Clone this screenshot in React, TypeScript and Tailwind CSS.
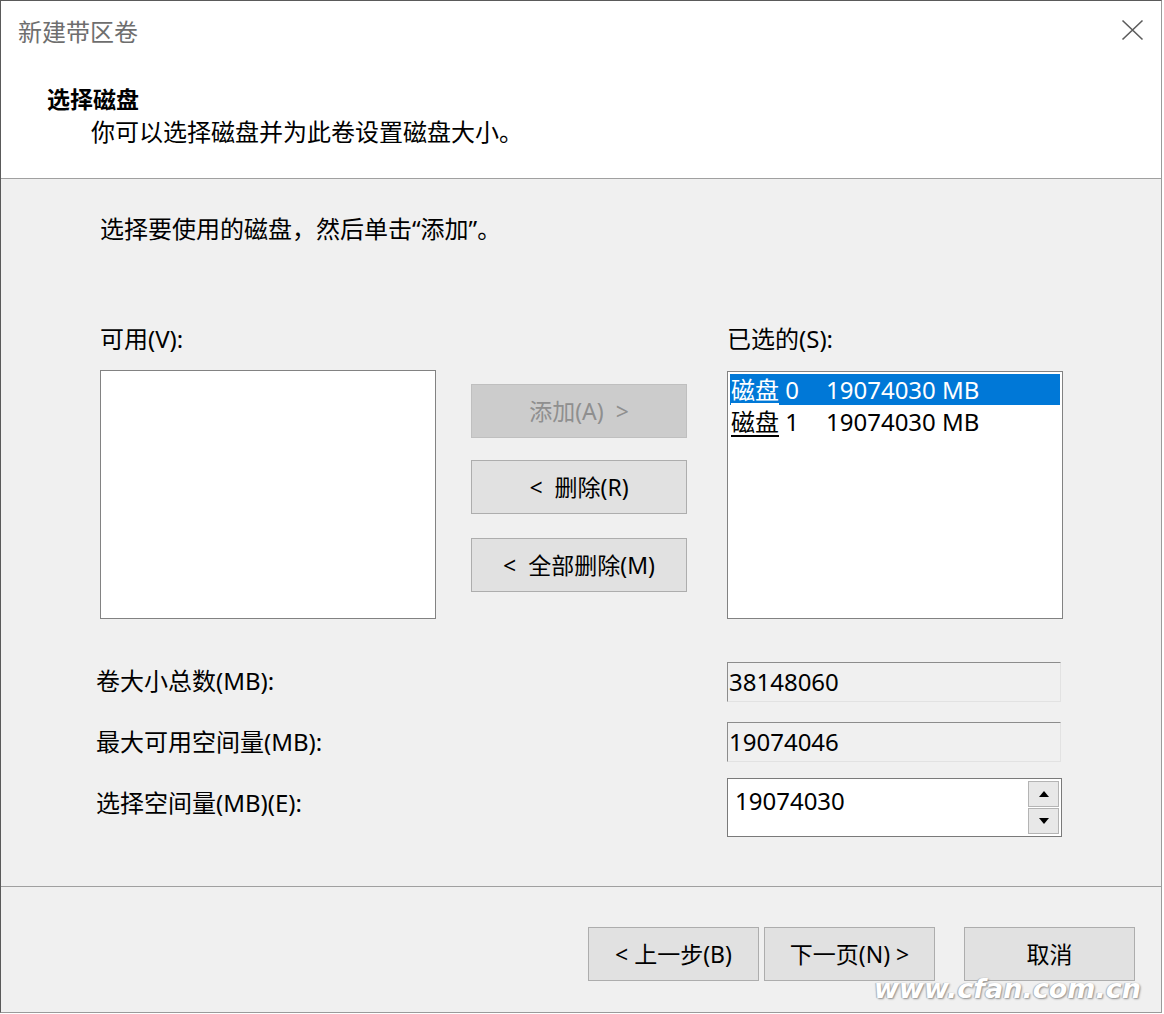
import React from 'react';

const font = { fontFamily: '"Noto Sans", "Noto Sans CJK SC", sans-serif' };

function WinButton({ children, disabled, className = '' }: { children: React.ReactNode; disabled?: boolean; className?: string }) {
  return (
    <div
      className={`h-[54px] flex items-center justify-center border text-[23px] ${
        disabled ? 'bg-[#cccccc] border-[#bfbfbf] text-[#8f8f8f]' : 'bg-[#e1e1e1] border-[#adadad] text-black'
      } ${className}`}
    >
      {children}
    </div>
  );
}

function ReadonlyField({ value }: { value: string }) {
  return (
    <div className="h-[40px] w-[334px] flex items-center pl-[1px] bg-[#f0f0f0] border-t border-l border-[#8c8c8c] border-r border-b border-r-[#e2e2e2] border-b-[#e2e2e2] text-[24px]">
      {value}
    </div>
  );
}

export default function App() {
  return (
    <div className="w-[1164px] h-[1014px] bg-white" style={font}>
      <div className="w-[1162px] h-[1013px] border border-[#5a5a5a] border-r-[#9a9a9a] border-b-[#9a9a9a] flex flex-col relative overflow-hidden">
        {/* header */}
        <div className="h-[178px] bg-white border-b border-[#a0a0a0] flex flex-col relative">
          <div className="h-[62px] pl-[17px] pt-[15px] text-[24px] leading-[32px] text-[#6e6e6e]">新建带区卷</div>
          <svg className="absolute left-[1120px] top-[18px]" width="23" height="22" viewBox="0 0 23 22">
            <path d="M1.5 1.5 L21.5 20.5 M21.5 1.5 L1.5 20.5" stroke="#5c5c5c" strokeWidth="1.6" fill="none" />
          </svg>
          <div className="pl-[46px] pt-[20px] text-[23px] leading-[32px] font-bold text-black">选择磁盘</div>
          <div className="pl-[90px] pt-[1px] text-[24px] leading-[32px] text-black">你可以选择磁盘并为此卷设置磁盘大小。</div>
        </div>

        {/* body */}
        <div className="h-[708px] bg-[#f0f0f0] border-b border-[#a0a0a0] flex flex-col text-black">
          <div className="pl-[99px] pt-[34px] text-[24px] leading-[32px]">选择要使用的磁盘，然后单击“添加”。</div>

          <div className="flex pl-[99px] pt-[78px]">
            <div className="w-[336px] flex flex-col">
              <div className="text-[24px] leading-[32px] h-[47px]">可用(V):</div>
              <div className="h-[249px] bg-white border border-[#828282]" />
            </div>

            <div className="w-[216px] ml-[35px] flex flex-col pt-[61px]">
              <WinButton disabled>添加(A) &nbsp;&gt;</WinButton>
              <WinButton className="mt-[22px]">&lt; &nbsp;删除(R)</WinButton>
              <WinButton className="mt-[24px]">&lt; &nbsp;全部删除(M)</WinButton>
            </div>

            <div className="w-[336px] ml-[40px] flex flex-col">
              <div className="text-[24px] leading-[32px] h-[48px]">已选的(S):</div>
              <div className="h-[248px] bg-white border border-[#828282] p-[2px] text-[24px]">
                <div className="h-[31px] bg-[#0078d7] text-white flex items-center pl-[1px]">
                  <span className="w-[95px]"><span className="underline underline-offset-4">磁盘</span> 0</span>
                  <span>19074030 MB</span>
                </div>
                <div className="h-[33px] flex items-center pl-[1px]">
                  <span className="w-[95px]"><span className="underline underline-offset-4">磁盘</span> 1</span>
                  <span>19074030 MB</span>
                </div>
              </div>
            </div>
          </div>

          <div className="grid grid-cols-[631px_334px] pl-[95px] pt-[43px] text-[24px] items-center">
            <div className="h-[40px] leading-[40px] -mt-[3px]">卷大小总数(MB):</div>
            <ReadonlyField value="38148060" />
            <div className="h-[40px] leading-[40px] mt-[20px]">最大可用空间量(MB):</div>
            <div className="mt-[20px]"><ReadonlyField value="19074046" /></div>
            <div className="h-[40px] leading-[40px] mt-[21px] self-start">选择空间量(MB)(E):</div>
            <div className="mt-[16px] h-[59px] w-[335px] bg-white border border-[#7a7a7a] flex">
              <div className="flex-1 pl-[7px] pt-[6px] leading-[32px]">19074030</div>
              <div className="w-[31px] mr-[2px] my-[2px] flex flex-col">
                <div className="h-[26px] bg-[#e8e8e8] border border-[#b4b4b4] flex items-center justify-center">
                  <svg width="10" height="6" viewBox="0 0 10 6"><path d="M0 6 L5 0 L10 6 Z" fill="#000" /></svg>
                </div>
                <div className="h-[26px] mt-[1px] bg-[#e8e8e8] border border-[#b4b4b4] flex items-center justify-center">
                  <svg width="10" height="6" viewBox="0 0 10 6"><path d="M0 0 L10 0 L5 6 Z" fill="#000" /></svg>
                </div>
              </div>
            </div>
          </div>
        </div>

        {/* footer */}
        <div className="flex-1 bg-[#f0f0f0] flex pt-[40px] pl-[587px]">
          <WinButton className="w-[171px]">&lt; 上一步(B)</WinButton>
          <WinButton className="w-[171px] ml-[5px]">下一页(N) &gt;</WinButton>
          <WinButton className="w-[171px] ml-[29px]">取消</WinButton>
        </div>

        <div
          className="absolute left-[873px] top-[968px] text-[27px] font-bold italic text-white pointer-events-none"
          style={{ fontFamily: '"DejaVu Sans", sans-serif', textShadow: '1px 1px 2px #8a8a8a, -1px 0 1px #b0b0b0' }}
        >
          www.cfan.com.cn
        </div>
      </div>
    </div>
  );
}
